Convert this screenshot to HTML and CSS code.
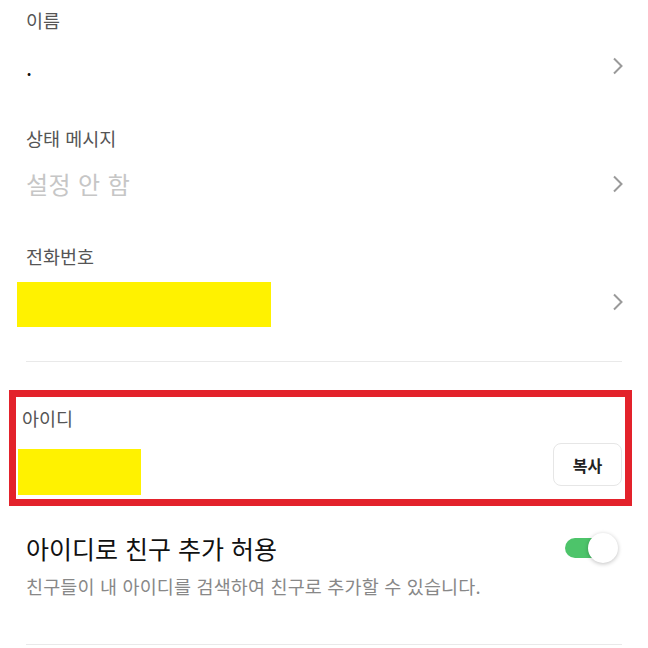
FILE: index.html
```html
<!DOCTYPE html>
<html lang="ko">
<head>
<meta charset="utf-8">
<link rel="stylesheet" href="styles.css">
</head>
<body>
<div class="page">
  <div class="field first">
    <div class="label">이름</div>
    <div class="value-row">
      <span class="value">.</span>
      <svg class="chev" width="12" height="18" viewBox="0 0 12 18"><path d="M2 1.5 L9.5 9 L2 16.5" fill="none" stroke="#9a9a9a" stroke-width="2"/></svg>
    </div>
  </div>
  <div class="field">
    <div class="label">상태 메시지</div>
    <div class="value-row">
      <span class="placeholder">설정 안 함</span>
      <svg class="chev" width="12" height="18" viewBox="0 0 12 18"><path d="M2 1.5 L9.5 9 L2 16.5" fill="none" stroke="#9a9a9a" stroke-width="2"/></svg>
    </div>
  </div>
  <div class="field">
    <div class="label">전화번호</div>
    <div class="value-row">
      <span class="mask phone"></span>
      <svg class="chev" width="12" height="18" viewBox="0 0 12 18"><path d="M2 1.5 L9.5 9 L2 16.5" fill="none" stroke="#9a9a9a" stroke-width="2"/></svg>
    </div>
  </div>
  <div class="divider top-div"></div>

  <div class="highlight">
    <div class="label id-label">아이디</div>
    <div class="id-row">
      <span class="mask idmask"></span>
      <button class="copy">복사</button>
    </div>
  </div>

  <div class="toggle-row">
    <div class="toggle-title">아이디로 친구 추가 허용</div>
    <div class="switch"><span class="knob"></span></div>
  </div>
  <div class="toggle-desc">친구들이 내 아이디를 검색하여 친구로 추가할 수 있습니다.</div>
  <div class="divider bottom-div"></div>
</div>
</body>
</html>
```

FILE: styles.css
```css
* { box-sizing: border-box; }
html, body { margin: 0; padding: 0; background: #fff; }
body {
  font-family: "Noto Sans CJK KR", "Noto Sans", sans-serif;
  width: 648px;
  height: 648px;
  overflow: hidden;
}
.page { display: flex; flex-direction: column; }
.field {
  margin: 34px 26px 0 26px;
  display: flex;
  flex-direction: column;
}
.field.first { margin-top: 5px; }
.label {
  font-size: 18.5px;
  line-height: 30px;
  height: 30px;
  color: #555;
}
.value-row {
  margin-top: 8px;
  height: 46px;
  display: flex;
  align-items: center;
  justify-content: space-between;
}
.value { font-size: 22px; color: #111; line-height: 46px; }
.placeholder { font-size: 24px; color: #c6c6c6; line-height: 46px; letter-spacing: 0.4px; }
.chev { margin-right: -2px; }
.mask { background: #fff200; display: block; }
.phone { width: 254px; height: 45px; margin-left: -9px; margin-top: 4px; }
.divider { height: 1px; background: #e9e9e9; margin: 0 26px; }
.top-div { margin-top: 36px; }
.highlight {
  margin: 28px 16px 0 9px;
  border: 7px solid #e3222b;
  height: 116px;
  padding: 6px 3px 4px 2px;
  display: flex;
  flex-direction: column;
}
.id-label { padding-left: 4px; }
.id-row {
  margin-top: 10px;
  height: 52px;
  display: flex;
  justify-content: space-between;
  align-items: flex-start;
}
.idmask { width: 123px; height: 46px; align-self: flex-end; }
.copy {
  width: 69px;
  height: 43px;
  border: 1px solid #e6e6e6;
  border-radius: 8px;
  background: #fff;
  font-family: "Noto Sans CJK KR", sans-serif;
  font-size: 16px;
  font-weight: 700;
  color: #222;
  padding: 0;
}
.toggle-row {
  margin: 24px 26px 0 26px;
  height: 36px;
  display: flex;
  align-items: center;
  justify-content: space-between;
}
.toggle-title { font-size: 25px; color: #111; line-height: 36px; }
.switch {
  position: relative;
  width: 40px;
  height: 20px;
  border-radius: 10px;
  background: #4dc46a;
  margin-right: 17px;
}
.knob {
  position: absolute;
  width: 30px;
  height: 30px;
  border-radius: 50%;
  background: #fff;
  top: -5px;
  left: 23px;
  box-shadow: 0 1px 4px rgba(0,0,0,0.25);
}
.toggle-desc {
  margin: 7px 26px 0 26px;
  font-size: 18.5px;
  letter-spacing: 0.15px;
  line-height: 26px;
  color: #888;
}
.bottom-div { margin-top: 45px; }
```
